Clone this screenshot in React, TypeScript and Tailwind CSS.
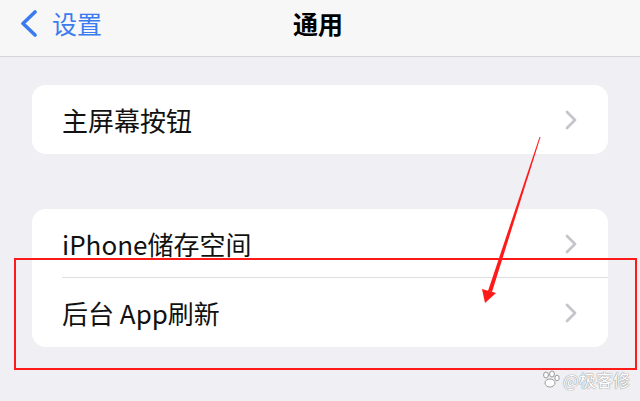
const font = "font-['Noto_Sans_CJK_SC','Noto_Sans',sans-serif]";

function Chevron() {
  return (
    <svg width="14" height="20" viewBox="0 0 14 20" fill="none">
      <path d="M3 2 L11 10 L3 18" stroke="#c5c5ca" strokeWidth="2.8" strokeLinecap="round" strokeLinejoin="round" />
    </svg>
  );
}

function Row({ label, divider }: { label: string; divider?: boolean }) {
  return (
    <div className="relative flex h-[69px] items-center justify-between pl-[30px] pr-[30px]">
      <span className="text-[26px] leading-none text-[#111]">{label}</span>
      <Chevron />
      {divider && <div className="absolute bottom-0 left-[30px] right-0 h-px bg-[#dedee2]" />}
    </div>
  );
}

export default function App() {
  return (
    <div className={`relative h-[401px] w-[640px] overflow-hidden bg-[#f0eff4] ${font}`}>
      {/* header */}
      <header className="flex h-[57px] items-start border-b border-[#d6d6d8] bg-[#f7f7f7] pt-[10px]">
        <div className="flex items-center gap-[13px] pl-[19px]">
          <svg width="20" height="27" viewBox="0 0 20 27" fill="none">
            <path d="M16 2 L4 13.5 L16 25" stroke="#3a7cf0" strokeWidth="3.6" strokeLinecap="round" strokeLinejoin="round" />
          </svg>
          <span className="text-[25px] leading-none text-[#3a7cf0]">设置</span>
        </div>
        <h1 className="ml-[191px] pt-[1px] text-[25px] font-bold leading-none text-black">通用</h1>
      </header>

      <div className="px-[32px] pt-[28px]">
        <div className="rounded-[14px] bg-white">
          <Row label="主屏幕按钮" />
        </div>

        <div className="mt-[55px] rounded-[14px] bg-white">
          <Row label="iPhone储存空间" divider />
          <Row label="后台 App刷新" />
        </div>
      </div>

      {/* red annotation box */}
      <div className="absolute left-[14px] top-[258px] h-[112px] w-[623px] border-2 border-[#ff1a1a]" />

      {/* red arrow */}
      <svg className="absolute left-0 top-0" width="640" height="401" viewBox="0 0 640 401">
        <polygon points="539.5,137 540.5,137 492,292 488,291" fill="#ff1a1a" />
        <polygon points="485,303 482,289 496,293" fill="#ff1a1a" />
      </svg>

      {/* watermark */}
      <div className="absolute left-[541px] top-[370px] flex items-center gap-[2px] text-[17px] leading-none text-white [text-shadow:0_0_1px_#888,0_0_1px_#888]">
        <svg width="20" height="18" viewBox="0 0 20 18">
          <g fill="#fff" stroke="#999" strokeWidth="1">
            <ellipse cx="5" cy="5" rx="2.4" ry="3" />
            <ellipse cx="11" cy="4" rx="2.4" ry="3" />
            <ellipse cx="16" cy="8" rx="2.2" ry="2.8" />
            <ellipse cx="9" cy="13" rx="5" ry="4" />
          </g>
        </svg>
        <span>@极客修</span>
      </div>
    </div>
  );
}
